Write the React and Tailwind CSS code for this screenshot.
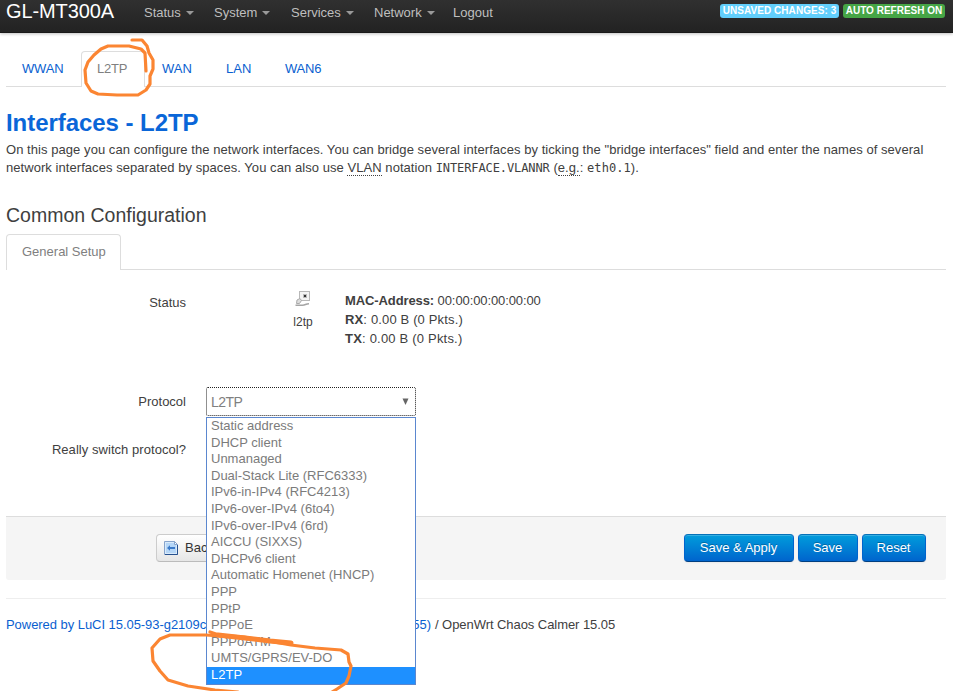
import React from "react";

const menus = [
  { label: "Status", w: "w-[70px]", caret: true },
  { label: "System", w: "w-[77px]", caret: true },
  { label: "Services", w: "w-[83px]", caret: true },
  { label: "Network", w: "w-[79px]", caret: true },
  { label: "Logout", w: "w-[60px]", caret: false },
];

const protocols = [
  "Static address",
  "DHCP client",
  "Unmanaged",
  "Dual-Stack Lite (RFC6333)",
  "IPv6-in-IPv4 (RFC4213)",
  "IPv6-over-IPv4 (6to4)",
  "IPv6-over-IPv4 (6rd)",
  "AICCU (SIXXS)",
  "DHCPv6 client",
  "Automatic Homenet (HNCP)",
  "PPP",
  "PPtP",
  "PPPoE",
  "PPPoATM",
  "UMTS/GPRS/EV-DO",
  "L2TP",
];

function Header() {
  return (
    <header className="h-[33px] flex items-start bg-gradient-to-b from-[#303030] to-[#222222] shadow-[0_1px_3px_rgba(0,0,0,0.25),inset_0_-1px_0_rgba(0,0,0,0.25)] pl-[6px] pr-[8px]">
      <div className="w-[138px] text-[20px] leading-[22px] tracking-[-0.1px] text-white whitespace-nowrap">GL-MT300A</div>
      <nav className="flex grow text-[13px] leading-[25px] text-[#bfbfbf]">
        {menus.map((m) => (
          <div key={m.label} className={`${m.w} flex items-center whitespace-nowrap`}>
            {m.label}
            {m.caret && (
              <span className="ml-[5px] border-x-4 border-t-4 border-x-transparent border-t-[#999999]" />
            )}
          </div>
        ))}
      </nav>
      <div className="flex gap-1 pt-1 text-[10px] leading-[14px] font-bold text-white whitespace-nowrap">
        <span className="w-[119px] rounded-[3px] bg-[#62cffc] text-center tracking-[0.05px]">UNSAVED CHANGES: 3</span>
        <span className="w-[102px] rounded-[3px] bg-[#46a546] text-center">AUTO REFRESH ON</span>
      </div>
    </header>
  );
}

function InterfaceTabs() {
  return (
    <div className="mt-[18px] h-[36px] flex border-b border-[#dddddd] text-[13px] leading-[36px] text-[#0a5fd0]">
      <span className="w-[75px] pl-[16px] tracking-[-0.2px]">WWAN</span>
      <span className="w-[64px] h-[36px] rounded-t-[4px] border border-b-0 border-[#dddddd] bg-white pl-[15px] leading-[34px] tracking-[-0.2px] text-[#808080]">L2TP</span>
      <span className="w-[64px] pl-[17px]">WAN</span>
      <span className="w-[59px] pl-[17px]">LAN</span>
      <span className="pl-[17px] tracking-[-0.2px]">WAN6</span>
    </div>
  );
}

function LinkIcon() {
  return (
    <svg width="16" height="16" viewBox="0 0 16 16" fill="none">
      <rect x="4.500" y=".5" width="10" height="9" fill="#f4f4f4" stroke="#b8b8b8" />
      <rect x="8" y="3" width="4" height="4" fill="#bbb" />
      <rect x="9" y="4" width="2" height="2" fill="#333" />
      <path d="M2 9l3-1.500 1.500 2-2 3H1.500z" fill="#ddd" stroke="#aaa" />
      <path d="M.5 14.200h7c3 0 3-1.500 6.500-1.500" stroke="#a5a5a5" strokeWidth="1.600" />
    </svg>
  );
}

function BackIcon() {
  return (
    <svg width="14" height="14" viewBox="0 0 14 14" fill="none">
      <path d="M.5.5h10l3 3v10H.5z" fill="#d9eafa" stroke="#86a3cb" />
      <path d="M2 2h8l2 2v8H2z" fill="#b5d6f7" />
      <path d="M10.500.5v3h3z" fill="#fff" stroke="#86a3cb" />
      <path d="M13.500 4v9.500H1" stroke="#27518f" />
      <path d="M3 7L6 4.300V6h5v2H6v1.700z" fill="#3b79c8" />
    </svg>
  );
}

function ProtocolSelect() {
  return (
    <div className="relative ml-[20px] w-[210px]">
      <div className="h-[29px] flex items-center justify-between rounded-[2px] border border-dotted border-[#222222] bg-white pl-1 pr-[6px] text-[14px] tracking-[-0.5px] text-[#808080]">
        <span>L2TP</span>
        <svg width="7" height="7" viewBox="0 0 7 7"><path d="M0.500 0.500h6L3.500 7z" fill="#666" /></svg>
      </div>
      <ul className="absolute left-0 top-[30px] z-10 w-[210px] border border-[#5b87cf] bg-white text-[13px] text-[#7b7b7b]">
        {protocols.map((p, i) => (
          <li
            key={p}
            className={`h-[16.600px] pl-1 leading-[16px] whitespace-nowrap ${i === 15 ? "bg-[#1e90ff] text-white" : ""}`}
          >
            {p}
          </li>
        ))}
      </ul>
    </div>
  );
}

function BlueButton({ children, width }) {
  return (
    <button
      className={`${width} h-[28px] rounded-[4px] border border-[#0064cd] border-t-[#0571b8] border-b-[#003f81] bg-gradient-to-b from-[#049cdb] to-[#0064cd] pr-[1px] text-[13px] text-white shadow-[inset_0_1px_0_rgba(255,255,255,0.2),0_1px_2px_rgba(0,0,0,0.05)] [text-shadow:0_-1px_0_rgba(0,0,0,0.25)]`}
    >
      {children}
    </button>
  );
}

function Annotations() {
  return (
    <svg className="pointer-events-none absolute inset-0 z-20" width="953" height="691" viewBox="0 0 953 691" fill="none" stroke="#fb8532" strokeWidth="3.200" strokeLinecap="round" strokeLinejoin="round">
      <path d="M132 40H142L147 46L149 53L153 60L153 69L150 76L150 84L146 90L138 95H117L98 94L91 91L86 83L85 70L88 62L94 55L101 49L108 46H129L141 49L145 53L146 71" />
      <path d="M210 632L219 635L244 637L268 641L291 645L315 648L341 650L348 654L349 662L351 666L349 676L346 683L337 689L332 692" />
      <path d="M238 692L215 690L188 686L168 680L160 671L153 661L152 648L160 639L170 635H206L232 637" />
      <path d="M218 635L245 638L270 641L291 643" strokeWidth="5" />
    </svg>
  );
}

export default function App() {
  return (
    <div className="relative h-[691px] w-[953px] overflow-hidden bg-white font-['Liberation_Sans',Arial,sans-serif] text-[13px] leading-[18px] text-[#404040]">
      <Header />
      <main className="pl-[6px] w-[946px]">
        <InterfaceTabs />
        <h2 className="mt-[18px] text-[24px] leading-[36px] tracking-[-0.05px] font-bold text-[#0a66d8]">Interfaces - L2TP</h2>
        <p className="w-[940px] whitespace-nowrap tracking-[0.057px]">
          <span className="block">On this page you can configure the network interfaces. You can bridge several interfaces by ticking the "bridge interfaces" field and enter the names of several</span>
          <span className="block">
            network interfaces separated by spaces. You can also use <abbr className="border-b border-dotted border-[#404040]">VLAN</abbr> notation{" "}
            <code className="font-['DejaVu_Sans_Mono',monospace] text-[12px] tracking-[-0.1px]">INTERFACE.VLANNR</code> (<abbr className="border-b border-dotted border-[#404040]">e.g.</abbr>:{" "}
            <code className="font-['DejaVu_Sans_Mono',monospace] text-[12px]">eth0.1</code>).
          </span>
        </p>
        <h3 className="mt-[20px] text-[19.5px] leading-[36px]">Common Configuration</h3>
        <div className="mt-px h-[36px] flex border-b border-[#dddddd]">
          <span className="w-[115px] h-[36px] rounded-t-[4px] border border-b-0 border-[#dddddd] bg-white pl-[15px] leading-[34px] text-[#808080]">General Setup</span>
        </div>
        <section className="h-[246px] pt-[21px]">
          <div className="h-[96px] flex">
            <span className="w-[180px] pt-[3px] text-right">Status</span>
            <div className="ml-[87px] w-[60px] flex flex-col items-center">
              <LinkIcon />
              <span className="mt-[6px] text-[12px]">l2tp</span>
            </div>
            <div className="ml-[12px] leading-[19px]">
              <div className="tracking-[-0.1px]"><b>MAC-Address:</b> 00:00:00:00:00:00</div>
              <div className="tracking-[0.15px]"><b>RX</b>: 0.00 B (0 Pkts.)</div>
              <div className="tracking-[0.2px]"><b>TX</b>: 0.00 B (0 Pkts.)</div>
            </div>
          </div>
          <div className="h-[48px] flex">
            <span className="w-[180px] pt-[6px] text-right">Protocol</span>
            <ProtocolSelect />
          </div>
          <div className="w-[180px] pt-[6px] text-right tracking-[0.05px]">Really switch protocol?</div>
        </section>
        <div className="h-[64px] flex justify-between rounded-b-[3px] border-t border-[#dddddd] bg-[#f5f5f5] pt-[17px] pl-[150px] pr-[20px]">
          <button className="h-[28px] w-[150px] flex items-center rounded-[4px] border border-[#cccccc] border-b-[#bbbbbb] bg-gradient-to-b from-white to-[#e6e6e6] pl-[7px] text-[#333333]">
            <BackIcon />
            <span className="ml-[7px] w-[21px] overflow-hidden text-left whitespace-nowrap">Bac</span>
          </button>
          <div className="flex gap-1">
            <BlueButton width="w-[110px]">Save &amp; Apply</BlueButton>
            <BlueButton width="w-[60px]">Save</BlueButton>
            <BlueButton width="w-[64px]">Reset</BlueButton>
          </div>
        </div>
        <footer className="mt-[18px] flex border-t border-[#eeeeee] pt-[17px] whitespace-nowrap">
          <span className="w-[425px] flex justify-between text-[#0a5fd0]">
            <span className="tracking-[-0.05px]">Powered by LuCI 15.05-93-g2109c</span>
            <span>55)</span>
          </span>
          <span className="ml-1 tracking-[-0.06px]">/ OpenWrt Chaos Calmer 15.05</span>
        </footer>
      </main>
      <Annotations />
    </div>
  );
}
